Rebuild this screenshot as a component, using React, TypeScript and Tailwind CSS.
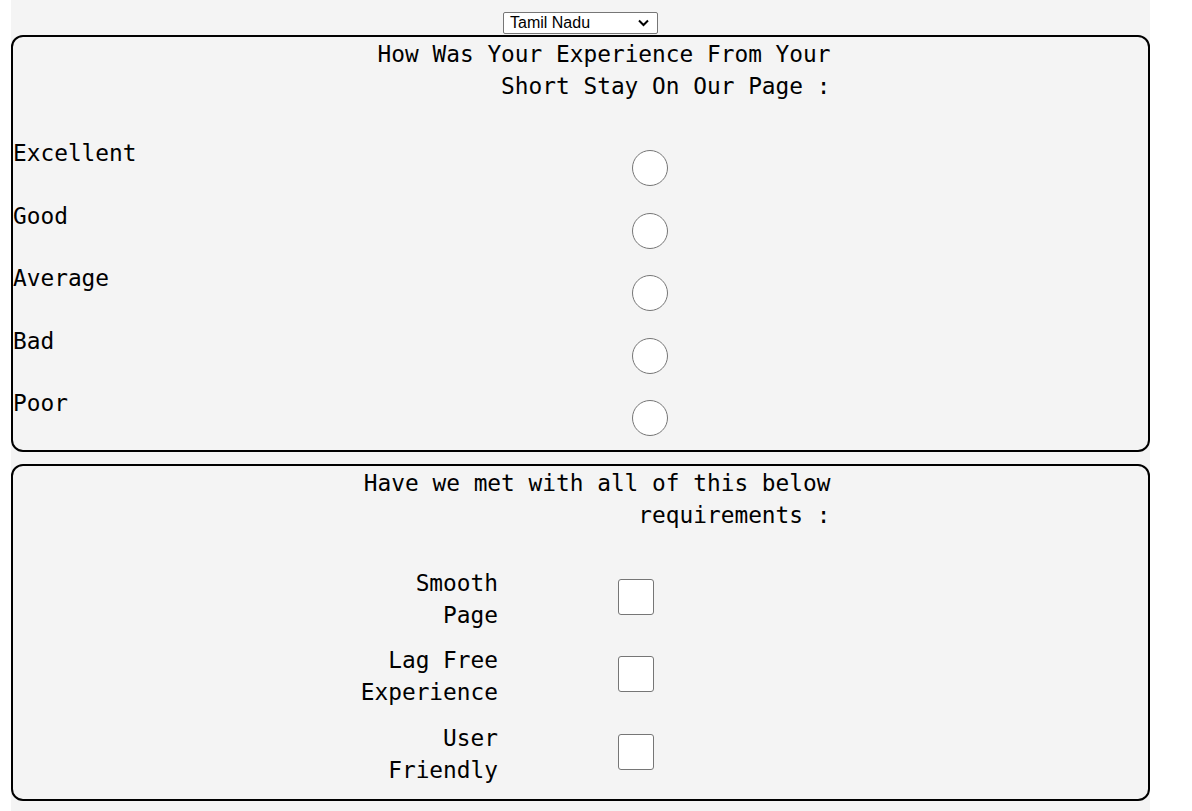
import React from "react";

const mono = { fontFamily: '"DejaVu Sans Mono", "Liberation Mono", monospace' };

const ratings = ["Excellent", "Good", "Average", "Bad", "Poor"];
const reqs = [
  ["Smooth", "Page"],
  ["Lag Free", "Experience"],
  ["User", "Friendly"],
];

export default function App() {
  return (
    <div className="min-h-[811px] w-[1192px] bg-white">
      <div
        className="ml-[11px] w-[1139px] min-h-[811px] bg-[#f4f4f4] pt-[12px] text-black"
        style={mono}
      >
        <div className="flex justify-center">
          <div
            className="flex h-[22px] w-[155px] items-center justify-between rounded-[2px] border border-[#767676] bg-white pl-[6px] pr-[8px] text-[16px] leading-none text-black"
            style={{ fontFamily: '"Liberation Sans", Arial, sans-serif' }}
          >
            <span>Tamil Nadu</span>
            <svg width="11" height="8" viewBox="0 0 11 8">
              <path d="M1 1.5 L5.5 6 L10 1.5" fill="none" stroke="#000" strokeWidth="2" />
            </svg>
          </div>
        </div>

        <div className="mt-[1px] rounded-[12px] border-2 border-black text-[22.8px] leading-[32px]">
          <div className="mx-auto w-[500px] pt-[1px] text-right">
            <div>How Was Your Experience From Your</div>
            <div>Short Stay On Our Page :</div>
          </div>
          <div className="mt-[35px]">
            {ratings.map((r) => (
              <div key={r} className="flex h-[62.5px] items-start">
                <div className="w-[619px]">{r}</div>
                <div className="mt-[13px] h-[36px] w-[36px] rounded-full border border-[#767676] bg-white" />
              </div>
            ))}
          </div>
        </div>

        <div className="mt-[12px] rounded-[12px] border-2 border-black pb-[13px] text-[22.8px] leading-[32px]">
          <div className="mx-auto w-[500px] pt-[1px] text-right">
            <div>Have we met with all of this below</div>
            <div>requirements :</div>
          </div>
          <div className="mt-[36px] flex flex-col gap-[13.5px]">
            {reqs.map((q) => (
              <div key={q.join(" ")} className="flex items-start pl-[345px]">
                <div className="w-[140px] text-right">
                  <div>{q[0]}</div>
                  <div>{q[1]}</div>
                </div>
                <div className="ml-[120px] mt-[12px] h-[36px] w-[36px] rounded-[3px] border border-[#767676] bg-white" />
              </div>
            ))}
          </div>
        </div>
      </div>
    </div>
  );
}
